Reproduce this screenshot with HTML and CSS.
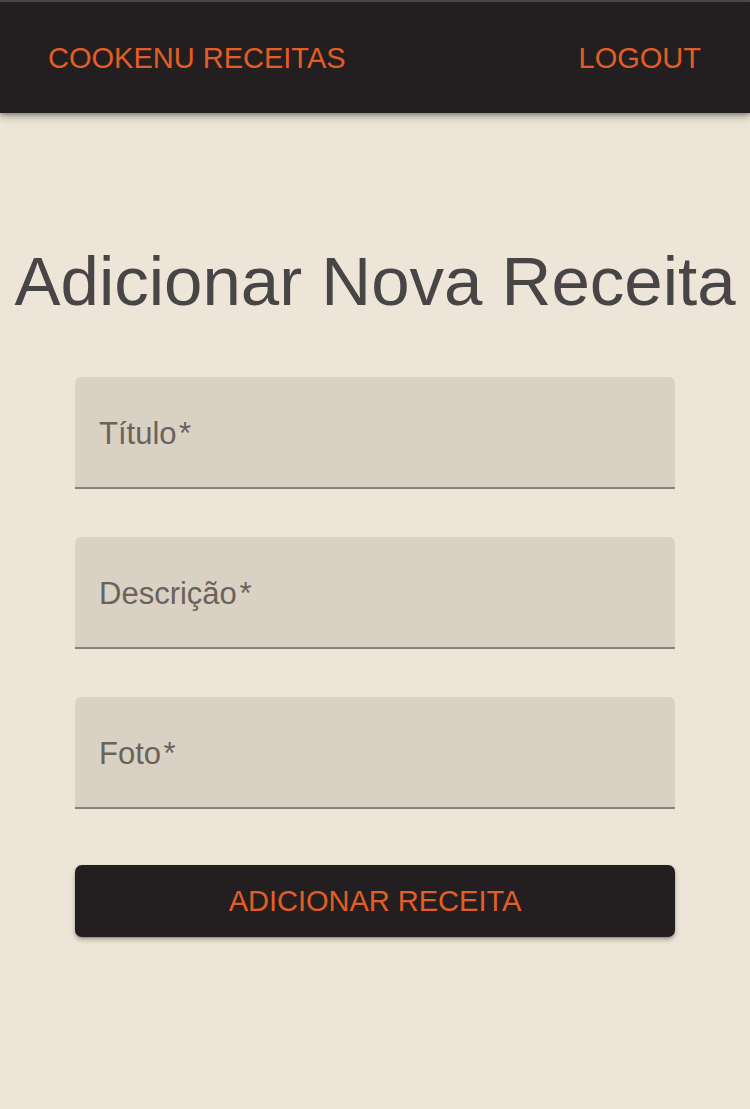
FILE: index.html
```html
<!DOCTYPE html>
<html lang="pt-BR">
<head>
<meta charset="utf-8">
<title>Cookenu - Adicionar Nova Receita</title>
<link rel="stylesheet" href="styles.css">
</head>
<body>
<div class="topline"></div>
<header class="appbar">
  <span class="brand">COOKENU RECEITAS</span>
  <span class="logout">LOGOUT</span>
</header>
<main class="page">
  <h1 class="title">Adicionar Nova Receita</h1>
  <form class="form">
    <div class="field"><span class="label">Título&#8202;*</span></div>
    <div class="field"><span class="label">Descrição&#8202;*</span></div>
    <div class="field"><span class="label">Foto&#8202;*</span></div>
    <button type="button" class="submit">ADICIONAR RECEITA</button>
  </form>
</main>
</body>
</html>
```
FILE: styles.css
```css
html, body {
  margin: 0;
  padding: 0;
}
body {
  background: #ede6d8;
  font-family: "Liberation Sans", Arial, Helvetica, sans-serif;
  min-height: 1109px;
}
.topline {
  height: 2px;
  background: #4d4941;
}
.appbar {
  height: 111px;
  background: #231f20;
  display: flex;
  align-items: center;
  justify-content: space-between;
  padding: 0 49px 0 48px;
  box-shadow: 0 4px 8px rgba(0, 0, 0, 0.28), 0 2px 3px rgba(0, 0, 0, 0.2);
  position: relative;
  z-index: 1;
}
.brand, .logout {
  color: #e35d26;
  font-size: 29px;
  line-height: 34px;
}
.page {
  display: flex;
  flex-direction: column;
  align-items: center;
}
.title {
  margin: 131px 0 57px;
  font-size: 69px;
  line-height: 76px;
  font-weight: 400;
  color: #474545;
  white-space: nowrap;
}
.form {
  width: 600px;
  display: flex;
  flex-direction: column;
  gap: 48px;
}
.field {
  height: 71px;
  padding: 39px 24px 0;
  background: #d9d1c4;
  border-radius: 6px 6px 0 0;
  border-bottom: 2px solid #8a8178;
}
.label {
  font-size: 31px;
  line-height: 36px;
  color: #6b635a;
}
.submit {
  margin-top: 8px;
  height: 72px;
  border: none;
  border-radius: 7px;
  background: #231f20;
  color: #e35d26;
  font-family: inherit;
  font-size: 29px;
  box-shadow: 0 3px 5px rgba(0, 0, 0, 0.25), 0 1px 2px rgba(0, 0, 0, 0.2);
  padding: 0;
}
```
